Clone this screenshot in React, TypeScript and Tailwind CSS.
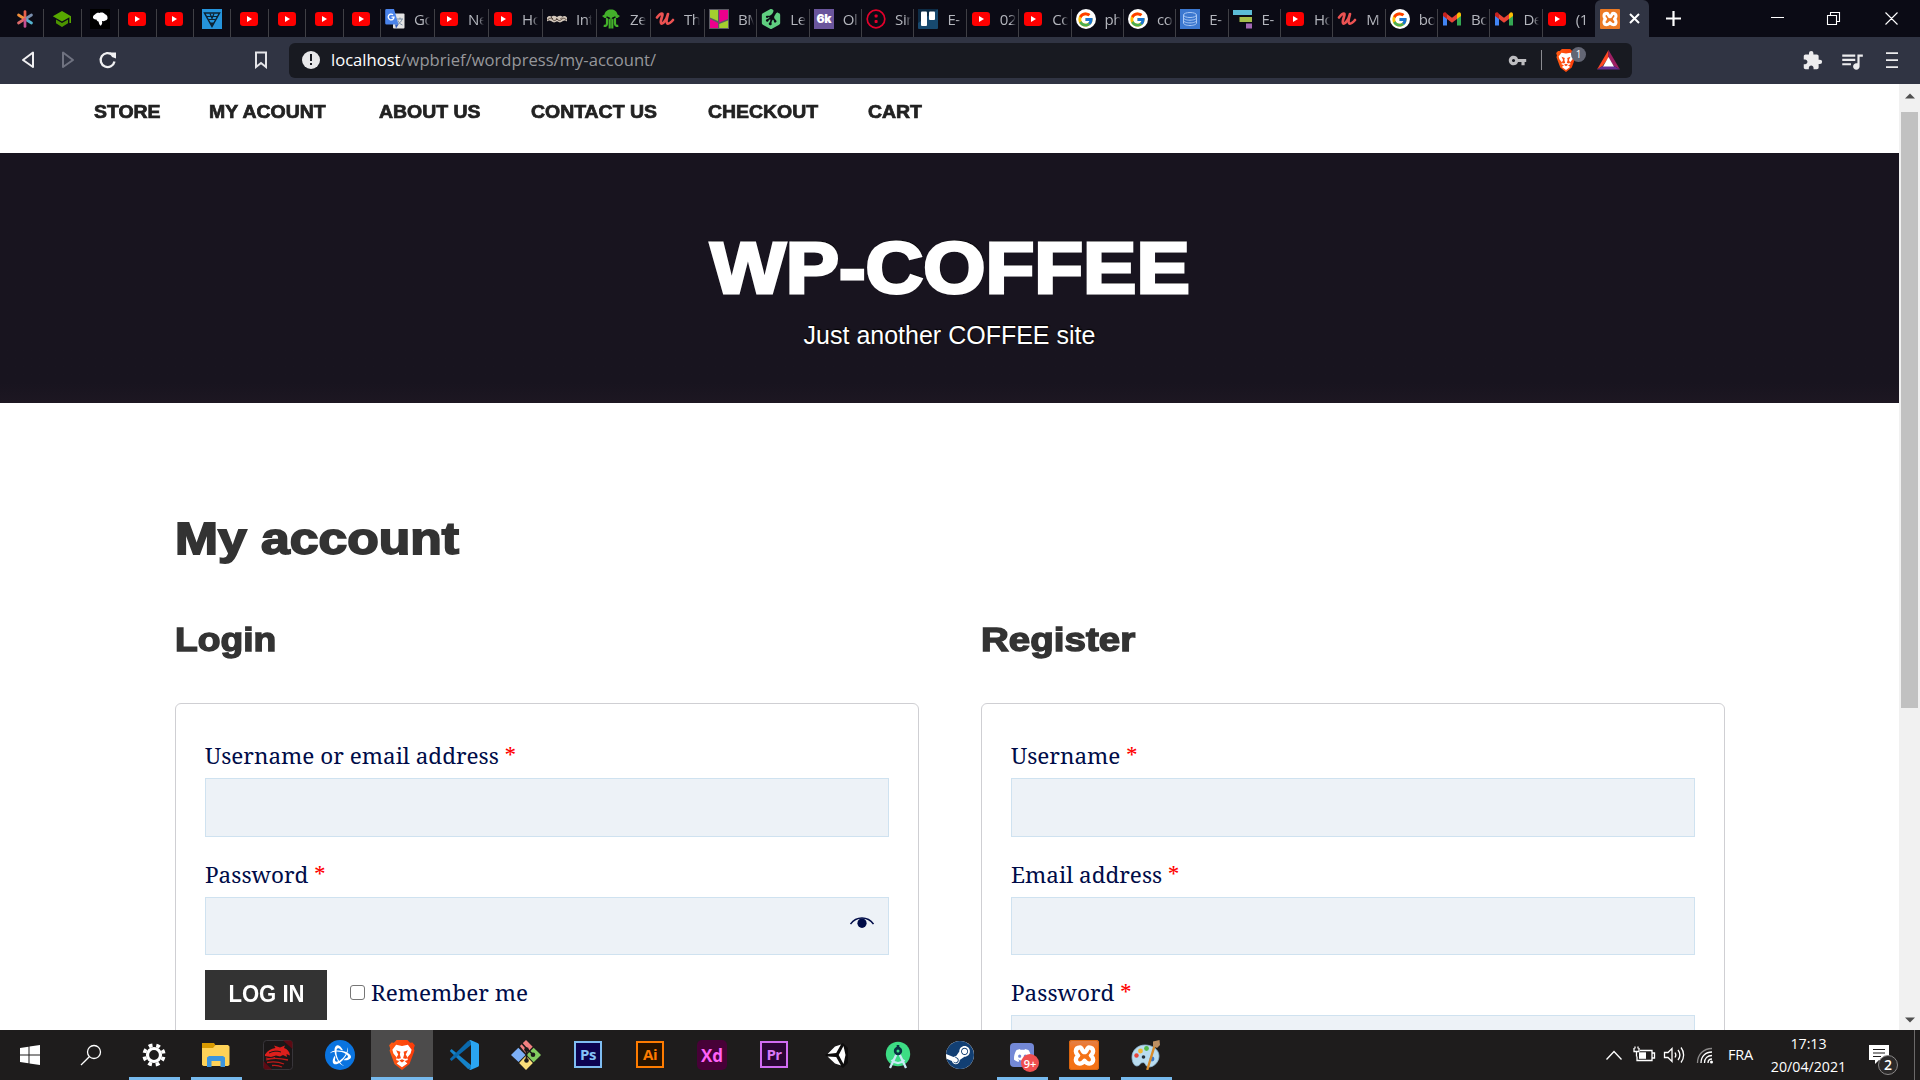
import React from "react";
import { SiSteam, SiBattledotnet, SiTreehouse, SiDiscord } from "react-icons/si";
import { FcGoogle } from "react-icons/fc";
import { MdExtension, MdVpnKey, MdQueueMusic } from "react-icons/md";

/* ---------- tab favicons (20 x 20) ---------- */

const YouTube = () => (
  <svg width="20" height="20" viewBox="0 0 20 20">
    <rect x="1" y="3" width="18" height="14" rx="3.2" fill="#f00" />
    <path d="M8 7v6l5-3z" fill="#fff" />
  </svg>
);

const Asterisk = () => (
  <svg width="20" height="20" viewBox="0 0 20 20" strokeWidth="2.7" strokeLinecap="round" fill="none">
    <path d="M10 8.500V2.500" stroke="#e8604c" />
    <path d="M9 9.500 3.500 6" stroke="#f2903a" />
    <path d="M11 9.500 16.500 6" stroke="#7a8fae" />
    <path d="M9 10.500 3.500 14" stroke="#dd6a6a" />
    <path d="M11 10.500 16.500 14" stroke="#54b3cf" />
    <path d="M10 11v6.500" stroke="#c44f92" />
    <circle cx="10" cy="10" r="1.600" fill="#d85a72" stroke="none" />
  </svg>
);

const GradCap = () => (
  <svg width="20" height="20" viewBox="0 0 20 20">
    <path d="M10 2 .8 7.200 10 12.500l7.400-4.200V14H19V7.200z" fill="#57a800" />
    <path d="M4 10.600v3.600L10 18l6-3.800v-3.600L10 14z" fill="#4c9400" />
  </svg>
);

const Profile = () => (
  <svg width="20" height="20" viewBox="0 0 20 20">
    <rect width="20" height="20" fill="#000" />
    <path d="M3 9c-.3-2 .8-3 2-3.500C6 4 8 3.500 9.500 4c2-.8 4.500-.3 5.500 1.200 1.800.5 2.700 2 2.500 3.600.3 1.400-.8 2.600-2.200 2.700-1 1-2.300.8-3.300.6.4 1.500.3 3.400-1.200 4.600-1.500-.7-1.800-2.700-2.300-4.200-1.200-.2-1.800-.8-2-2C5 10.500 4 10.500 3 9z" fill="#fff" />
  </svg>
);

const BlueTriangle = () => (
  <svg width="20" height="20" viewBox="0 0 20 20">
    <rect width="20" height="20" fill="#2594dc" />
    <path d="M2.500 4h15L10 17.500z" fill="none" stroke="#0c2233" strokeWidth="1.500" />
    <path d="M4.500 7.500h11M6.500 10.500h7M8 4.500l2 5 2-5" fill="none" stroke="#0c2233" strokeWidth="1.200" />
    <path d="M8 13.500h4l-2 3.500z" fill="#0c2233" />
  </svg>
);

const Translate = () => (
  <svg width="20" height="20" viewBox="0 0 20 20">
    <rect x="8" y="4.500" width="11.500" height="15" rx="1" fill="#e3e3e3" />
    <path d="M12 10h6M15 8.500V10M17 10c-.5 2.500-2.500 4.500-4.500 5.500M13 11.500c.5 1.800 2 3.500 4.500 4.500" stroke="#7b8fa5" strokeWidth="1" fill="none" />
    <path d="M1.500 0H9l4.500 15.500h-12A1.300 1.300 0 0 1 .2 14.200V1.300A1.300 1.300 0 0 1 1.500 0z" fill="#4a83ea" />
    <path d="m10 15.500 3.500 0-2.500 4z" fill="#3058b8" />
    <path d="M8 5.800a2.900 2.900 0 1 0 1 2.400H6.500" stroke="#fff" strokeWidth="1.300" fill="none" />
  </svg>
);

const Rope = () => (
  <svg width="20" height="20" viewBox="0 0 20 20">
    <path d="M0 8.500c1.500-1.500 3-1.800 4.500-.8 1.500-1.500 3.500-1.300 5.500.3 2-1.600 4-1.800 5.500-.3 1.500-1 3-.7 4.500.8v4c-1.500-1.500-3-1.200-4.500-.2-1.500 1.500-3.500 1.500-5.500 0-2 1.500-4 1.500-5.500 0-1.500-1-3-1.300-4.500.2z" fill="#d3c7bb" />
    <path d="M.5 11c2-2.500 3.500-2 5-.5s3 1.300 4.500-.5c1.500 1.800 3 2 4.500.5s3-2 5 .5M4 8l2 2M9 9.500l2 1M15 8.500l-1.500 1.500" stroke="#54463d" strokeWidth="1" fill="none" />
  </svg>
);

const Squid = () => (
  <svg width="20" height="20" viewBox="0 0 20 20">
    <path d="M3.500 5.500C4 2.500 6.500.5 10 .5s6 2 6.500 5L19 7l-2.500 2H3.500L1 7z" fill="#43b02a" />
    <path d="M6 9v5.500c0 2-1.500 2.500-3.300 2.300M8.700 9v10.500M11.300 9v10.500M14 9v5.500c0 2 1.500 2.500 3.300 2.300" stroke="#43b02a" strokeWidth="2.200" fill="none" />
    <path d="M5.500 7.800 8.800 9.500M14.500 7.800l-3.300 1.700" stroke="#0b0b14" strokeWidth="1.500" />
  </svg>
);

const Udemy = () => (
  <svg width="20" height="20" viewBox="0 0 20 20">
    <path d="M2 8.500C4 6 5.500 4.500 7 4.700c2 .3-2.300 6.800-1 9.300 1.300 2.200 5.500-3 7-9 -1.200 4.500-2.200 8.800-.5 9.500 1.500.6 3.800-1.500 5.500-3.500" stroke="#ec5252" strokeWidth="2.700" strokeLinecap="round" strokeLinejoin="round" fill="none" />
  </svg>
);

const PinkLime = () => (
  <svg width="20" height="20" viewBox="0 0 20 20">
    <rect width="20" height="20" fill="#5b5b63" />
    <path d="M1 1h8v11L1 8.500z" fill="#a4cf2e" />
    <path d="M10.200 1H19v9l-8.800 3.500z" fill="#ec008c" />
    <path d="M1 10l8 4v5H1z" fill="#ec008c" />
    <path d="M10.200 15 19 11.500V19h-8.800z" fill="#a4cf2e" />
  </svg>
);

const Bk = () => (
  <div className="flex h-5 w-5 items-center justify-center bg-[#6a559c] font-['Inter'] text-[12px] font-black leading-none tracking-[-0.5px] text-white">6k</div>
);

const RedFace = () => (
  <svg width="20" height="20" viewBox="0 0 20 20">
    <circle cx="10" cy="10" r="8.800" fill="none" stroke="#e4002b" strokeWidth="1.700" />
    <rect x="8.600" y="5.500" width="3" height="3" rx=".8" fill="#e4002b" />
    <rect x="8.600" y="11" width="3" height="3" rx=".8" fill="#e4002b" />
  </svg>
);

const Trello = () => (
  <svg width="20" height="20" viewBox="0 0 20 20">
    <rect width="20" height="20" rx="1" fill="#17496f" />
    <path d="M0 0h20L0 14z" fill="#0d2c46" />
    <rect x="3" y="2.500" width="6" height="14.500" rx="1" fill="#fff" />
    <rect x="11" y="2.500" width="6" height="8.500" rx="1" fill="#fff" />
  </svg>
);

const Database = () => (
  <svg width="20" height="20" viewBox="0 0 20 20">
    <rect width="20" height="20" fill="#3c78d0" />
    <g fill="none" stroke="#a9c8f5" strokeWidth="1">
      <ellipse cx="10" cy="6" rx="6.500" ry="2.500" />
      <path d="M3.500 6v8c0 1.400 3 2.500 6.500 2.500s6.500-1.100 6.500-2.500V6M3.500 8.700c0 1.400 3 2.500 6.500 2.500s6.500-1.100 6.500-2.500M3.500 11.400c0 1.400 3 2.500 6.500 2.500s6.500-1.100 6.500-2.500" />
    </g>
  </svg>
);

const Gantt = () => (
  <svg width="20" height="20" viewBox="0 0 20 20">
    <rect x="0" y="1" width="19" height="5" fill="#5bbcd6" />
    <rect x="6.500" y="8" width="12.500" height="5" fill="#a5bf4a" />
    <rect x="13" y="14.500" width="6" height="5" fill="#a368b5" />
  </svg>
);

const Gmail = () => (
  <svg width="20" height="20" viewBox="0 0 20 20">
    <path d="M1 6v10.500h4V9z" fill="#4285f4" />
    <path d="M19 6v10.500h-4V9z" fill="#34a853" />
    <path d="M15 5v5l4-3V5.200c0-2-2-2.600-3-1.500z" fill="#fbbc04" />
    <path d="M5 5 10 8.700 15 5v5l-5 3.800L5 10z" fill="#ea4335" />
    <path d="M1 5.200V7l4 3V4.700l-1-.9C3 2.800 1 3.500 1 5.200z" fill="#c5221f" />
  </svg>
);

const Google = () => (
  <div className="flex h-5 w-5 items-center justify-center rounded-full bg-white">
    <FcGoogle size={17} />
  </div>
);

const Treehouse = () => (
  <div className="flex h-5 w-5 items-center justify-center"><SiTreehouse size={20} color="#5fcf80" /></div>
);

const Xampp = ({ large = false }: { large?: boolean }) => (
  <div className={large ? "flex h-[30px] w-[30px] items-center justify-center rounded-[3px] bg-gradient-to-b from-[#e0814a] to-[#f47216] to-30% ring-1 ring-inset ring-[#d9640f]" : "flex h-5 w-5 items-center justify-center rounded-[1px] bg-[#ec7a24]"}>
    <svg width={large ? 23 : 16} height={large ? 23 : 16} viewBox="0 0 24 24" fill="none" stroke="#fff" strokeWidth="4.600" strokeLinejoin="round">
      <path d="M7.500 3.500C4.500 3.500 3 5.200 3 7.500c0 2 1 3.300 2.300 4.500C4 13.200 3 14.500 3 16.500c0 2.300 1.500 4 4 4s3.500-1 5-3c1.500 2 2.500 3 5 3s4-1.700 4-4c0-2-1-3.300-2.300-4.500C20 10.800 21 9.500 21 7.500c0-2.300-1.500-4-4.500-4M7.500 3.500C9.500 3.500 9.500 8.500 12 8.500s2.500-5 4.500-5" />
    </svg>
  </div>
);

/* ---------- browser chrome ---------- */

const smallTabs: React.FC[] = [Asterisk, GradCap, Profile, YouTube, YouTube, BlueTriangle, YouTube, YouTube, YouTube, YouTube];

const wideTabs: [React.FC, string][] = [
  [Translate, "Go"], [YouTube, "Ne"], [YouTube, "Ho"], [Rope, "Int"], [Squid, "Ze"], [Udemy, "Th"], [PinkLime, "BM"], [Treehouse, "Le"],
  [Bk, "Ol"], [RedFace, "Sin"], [Trello, "E-"], [YouTube, "02"], [YouTube, "Co"], [Google, "ph"], [Google, "co"], [Database, "E-"],
  [Gantt, "E-"], [YouTube, "Ho"], [Udemy, "M"], [Google, "bo"], [Gmail, "Bo"], [Gmail, "De"], [YouTube, "(1"],
];

function TabStrip() {
  return (
    <div className="flex h-[37px] bg-[#0b0b15]">
      <div className="flex w-[381px] shrink-0 pl-[7px]">
        {smallTabs.map((Icon, i) => (
          <div key={i} className="flex flex-1 pt-[9px]">
            <div className="flex flex-1 justify-center border-r border-[#3f3f45] pr-px"><Icon /></div>
          </div>
        ))}
      </div>
      <div className="flex w-[1214px] shrink-0">
        {wideTabs.map(([Icon, label], i) => (
          <div key={i} className={i < 6 ? "flex w-[54px] shrink-0 pt-[9px]" : "flex min-w-0 flex-1 pt-[9px]"}>
            <div className={i === wideTabs.length - 1 ? "flex min-w-0 flex-1 pl-[4px]" : "flex min-w-0 flex-1 border-r border-[#3f3f45] pl-[4px]"}>
              <div className="shrink-0"><Icon /></div>
              <div className="ml-[9px] w-[16px] overflow-hidden whitespace-nowrap font-['Open_Sans',sans-serif] text-[15px] leading-5 tracking-[-0.400px] text-[#b4b6bd] [mask-image:linear-gradient(to_right,#000_65%,transparent)]">{label}</div>
            </div>
          </div>
        ))}
      </div>
      <div className="flex w-[54px] shrink-0 rounded-t-[6px] bg-[#303443] pl-[5px] pt-[9px]">
        <Xampp />
        <svg className="ml-[9px] mt-1" width="11" height="11" viewBox="0 0 11 11" stroke="#fff" strokeWidth="2"><path d="m1 1 9 9m0-9-9 9" /></svg>
      </div>
      <svg className="ml-[17px] mt-[11px]" width="15" height="15" viewBox="0 0 15 15" stroke="#fff" strokeWidth="2.200"><path d="M7.500 0v15M0 7.500h15" /></svg>
      <div className="ml-auto flex pr-[22px] pt-3">
        <svg width="127" height="13" viewBox="0 0 127 13" stroke="#fff" fill="none" strokeWidth="1.100">
          <path d="M0 5.500h13M56.500 3.500h9v9h-9zM59.500 3.500V.5h9v9h-3M114.500.5l12 12m0-12-12 12" />
        </svg>
      </div>
    </div>
  );
}

function Toolbar() {
  return (
    <div className="flex h-[47px] items-center bg-[#303443]">
      <svg className="ml-5 -mt-px" width="96" height="20" viewBox="0 0 96 20" fill="none" strokeWidth="2" strokeLinejoin="round">
        <path d="M13 2.500v14.500L3 10z" stroke="#f0f0f2" />
        <path d="M43 2.500v14.500l10-7z" stroke="#6f7280" />
        <path d="M92.500 5A7 7 0 1 0 94.500 11.500" stroke="#f0f0f2" strokeWidth="2.300" />
        <path d="M89.500 2.500H96v6l-4-1.500z" fill="#f0f0f2" />
      </svg>
      <svg className="-mt-px ml-[139px]" width="12" height="18" viewBox="0 0 12 18" fill="none" stroke="#e4e4e8" strokeWidth="2"><path d="M1 1.500h10V16l-5-4-5 4z" /></svg>
      <div className="-mt-px ml-[22px] flex h-[35px] w-[1343px] items-center rounded-[6px] bg-[#181a21]">
        <div className="ml-[13px] flex h-[18px] w-[18px] flex-col items-center rounded-full bg-[#e8e8ea] pt-[3px]">
          <span className="h-[7px] w-[2px] bg-[#181a21]" />
          <span className="mt-[2px] h-[2px] w-[2px] bg-[#181a21]" />
        </div>
        <div className="ml-[11px] whitespace-nowrap font-['Open_Sans',sans-serif] text-[16.600px] leading-none text-[#96979b]"><span className="text-white">localhost</span>/wpbrief/wordpress/my-account/</div>
        <MdVpnKey className="ml-auto" size={19} color="#bdbdc0" />
        <div className="ml-[14px] h-5 w-px bg-[#8a8b90]" />
        <div className="relative ml-[14px]">
          <BraveLion width={20} height={23} />
          <span className="absolute -top-[2px] left-[15px] flex h-[15px] w-[15px] items-center justify-center rounded-full bg-[#636674] font-['Open_Sans',sans-serif] text-[10px] leading-none text-white">1</span>
        </div>
        <svg className="ml-[21px] mr-[12px]" width="23" height="20" viewBox="0 0 23 20">
          <path d="M11.500 0v8L5.500 16 0 19.500z" fill="#ff4724" />
          <path d="M11.500 0 23 19.500 17 16l-5.500-8z" fill="#9e1f63" />
          <path d="M0 19.500h23L17 16H5.500z" fill="#662d91" />
          <path d="M11.500 7 17 16.500H6z" fill="#fff" />
        </svg>
      </div>
      <div className="ml-auto flex items-center pr-[22px]">
        <MdExtension size={21} color="#ececee" />
        <MdQueueMusic className="ml-[16px]" size={26} color="#ececee" />
        <svg className="ml-[21px]" width="12" height="17" viewBox="0 0 12 17" stroke="#ececee" strokeWidth="1.800"><path d="M0 1.200h12M0 8.200h12M0 15.200h12" /></svg>
      </div>
    </div>
  );
}

function BraveLion({ width, height }: { width: number; height: number }) {
  return (
    <svg width={width} height={height} viewBox="0 0 24 28">
      <defs>
        <linearGradient id="lion" x1="0" x2="1"><stop offset="0" stopColor="#ff5a12" /><stop offset="1" stopColor="#fb3a08" /></linearGradient>
      </defs>
      <path d="M7 0h10l2.500 2.500 2.200-.2L24 5l-1 3 .6 2-4.600 12.500L12 28l-7-5.500L.4 10 1 8 0 5l2.300-2.700 2.200.2z" fill="url(#lion)" />
      <path d="M12 5.500 17.500 4.500 21 9l-1 3.500-3.200 4 .7 2.200-3 1L17 22l-5 3.500L7 22l2.500-2.300-3-1 .7-2.200L4 12.500 3 9l3.500-4.500z" fill="#fff" />
      <path d="M6.500 9.500 10.500 11l-.5 2.500L11 17l-3 .7-1-1.700 1.500-2.500zM17.500 9.500 13.500 11l.5 2.500L13 17l3 .7 1-1.700-1.500-2.500zM9.500 19.200 12 18l2.500 1.200L12 21z" fill="#fb4a10" />
    </svg>
  );
}

/* ---------- page ---------- */

const navItems: [string, string][] = [
  ["STORE", "w-[115px]"], ["MY ACOUNT", "w-[169.500px]"], ["ABOUT US", "w-[152px]"], ["CONTACT US", "w-[177px]"], ["CHECKOUT", "w-[160.500px]"], ["CART", "w-[60px]"],
];

const Field = ({ label, tall = false, eye = false }: { label: string; tall?: boolean; eye?: boolean }) => (
  <div>
    <div className="h-[30px] whitespace-nowrap text-[22.500px] leading-[30px] text-[#000c48]">
      {label} <span className="text-[#f00]">*</span>
    </div>
    <div className={tall ? "mt-[7px] flex h-[59px] justify-end border border-[#cfe2f0] bg-[#edf2f7]" : "mt-[7px] flex h-[58px] justify-end border border-[#cfe2f0] bg-[#edf2f7]"}>
      {eye && (
        <svg className="mr-[14px] mt-[19px]" width="24" height="12" viewBox="0 0 24 12">
          <path d="M.5 7C3 3.500 7 1 12 1s9 2.500 11.500 6" fill="none" stroke="#000c48" strokeWidth="1.500" />
          <ellipse cx="12" cy="6.200" rx="4.600" ry="4.800" fill="#000c48" />
        </svg>
      )}
    </div>
  </div>
);

function Page() {
  return (
    <div className="flex h-[946px] overflow-hidden bg-white">
      <div className="w-[1899px] shrink-0">
        <nav className="flex h-[69px] pl-[94px] pt-[16px] font-['Liberation_Sans',sans-serif] text-[17.500px] font-bold leading-6 text-[#222] [-webkit-text-stroke:0.700px_#222]">
          {navItems.map(([t, w]) => <div key={t} className={`${w} whitespace-nowrap`}><span className="inline-block origin-left scale-x-[1.110]">{t}</span></div>)}
        </nav>
        <header className="flex h-[250px] flex-col items-center bg-gradient-to-b from-[#18141f] from-92% to-[#1d1722] text-white">
          <h1 className="mt-[70px] h-[90px] scale-x-[1.110] font-['Liberation_Sans',sans-serif] text-[72px] font-bold leading-[90px] [-webkit-text-stroke:3px_#fff] [text-shadow:1px_-2px_1px_#000]">WP-COFFEE</h1>
          <p className="mt-[6px] font-['Liberation_Sans',sans-serif] text-[25px] leading-[32px] [text-shadow:1px_-1px_1px_#000]">Just another COFFEE site</p>
        </header>
        <main className="pl-[175px] pt-[106px]">
          <h2 className="h-[60px] origin-left scale-x-[1.160] font-['Liberation_Sans',sans-serif] text-[44.500px] font-bold leading-[60px] text-[#333] [-webkit-text-stroke:1.800px_#333]">My account</h2>
          <div className="mt-[46px] flex gap-[62px]">
            <section className="w-[744px]">
              <h3 className="h-[50px] origin-left scale-x-[1.110] font-['Liberation_Sans',sans-serif] text-[33.500px] font-bold leading-[50px] text-[#333] [-webkit-text-stroke:1.400px_#333]">Login</h3>
              <div className="mt-[38px] h-[500px] rounded-[6px] border border-[#cfcfd3] px-[29px] pt-[37px] font-['Noto_Serif',serif]">
                <Field label="Username or email address" tall />
                <div className="mt-[23px]"><Field label="Password" eye /></div>
                <div className="mt-[15px] flex items-start">
                  <div className="flex h-[50px] w-[122px] items-center justify-center bg-[#333] pb-px font-['Liberation_Sans',sans-serif] font-bold leading-none text-white"><span className="scale-x-[0.940] whitespace-nowrap text-[23.500px]">LOG IN</span></div>
                  <div className="ml-[23px] mt-[15px] h-[15px] w-[15px] rounded-[3px] border border-[#767676] bg-white" />
                  <div className="ml-[6px] mt-[8px] text-[22.500px] leading-[30px] text-[#000c48]">Remember me</div>
                </div>
              </div>
            </section>
            <section className="w-[744px]">
              <h3 className="h-[50px] origin-left scale-x-[1.150] font-['Liberation_Sans',sans-serif] text-[33.500px] font-bold leading-[50px] text-[#333] [-webkit-text-stroke:1.400px_#333]">Register</h3>
              <div className="mt-[38px] h-[500px] rounded-[6px] border border-[#cfcfd3] px-[29px] pt-[37px] font-['Noto_Serif',serif]">
                <Field label="Username" tall />
                <div className="mt-[23px]"><Field label="Email address" /></div>
                <div className="mt-[23px]"><Field label="Password" /></div>
              </div>
            </section>
          </div>
        </main>
      </div>
      <div className="flex w-[21px] flex-col items-center bg-[#f1f1f1]">
        <svg className="mt-[9px] shrink-0" width="10" height="6" viewBox="0 0 10 6"><path d="M0 5.500h10L5 .5z" fill="#505050" /></svg>
        <div className="mt-[13px] h-[596px] w-[17px] bg-[#c1c1c1]" />
        <svg className="mb-[7px] mt-auto shrink-0" width="10" height="6" viewBox="0 0 10 6"><path d="M0 .5h10l-5 5z" fill="#505050" /></svg>
      </div>
    </div>
  );
}

/* ---------- taskbar ---------- */

const AdobeTile = ({ label, box }: { label: string; box: string }) => (
  <div className={`flex h-[27px] w-7 -translate-y-px items-center justify-center border-2 font-['Open_Sans',sans-serif] text-[15px] font-bold leading-none tracking-[-0.500px] ${box}`}>{label}</div>
);

const taskIcons: { icon: React.ReactNode; open?: boolean; active?: boolean }[] = [
  { icon: <svg width="20" height="20" viewBox="0 0 20 20" fill="#fff"><path d="M0 3 8.500 1.700v7.800H0zM9.500 1.500 20 0v9.500H9.500zM0 10.500h8.500v7.800L0 17zM9.500 10.500H20V20L9.500 18.500z" /></svg> },
  { icon: <svg className="mr-[3px]" width="22" height="22" viewBox="0 0 22 22" fill="none" stroke="#fff" strokeWidth="1.300"><circle cx="14" cy="8" r="6.500" /><path d="M9.300 12.700 1 21" /></svg> },
  {
    open: true,
    icon: (
      <svg width="24" height="24" viewBox="0 0 24 24" fill="none" stroke="#fff">
        <circle cx="12" cy="12" r="6.500" strokeWidth="3.200" />
        <circle cx="12" cy="12" r="9.800" strokeWidth="3.600" strokeDasharray="3.850 3.850" strokeDashoffset="-2" />
      </svg>
    ),
  },
  {
    open: true,
    icon: (
      <svg width="28" height="24" viewBox="0 0 28 24">
        <path d="M0 0h12l2 3v4H0z" fill="#d99a00" />
        <path d="M0 5h11l2.500-3H26l1.500 1.500V22L26 23H1.500L0 22z" fill="#ffd257" />
        <path d="M5 24V14.500L7 13h14l2 1.500V24h-4.500v-6h-9v6z" fill="#3d95dd" />
      </svg>
    ),
  },
  {
    icon: (
      <svg width="30" height="30" viewBox="0 0 30 30">
        <rect x=".5" y=".5" width="29" height="29" rx="3" fill="#1a1718" stroke="#38353a" />
        <path d="M20 .5h7q2.500 0 2.500 2.500v6zM.5 21v6q0 2.500 2.500 2.500h6z" fill="#5c0a13" />
        <path d="M2 14.500c3-4 6-6 10.500-6.500L11 5.500l6 2 5-2-1 2.500c3.500 1 5.500 3.500 6 7.500l-3.500-1.500.5 3-4-2-3 1.500-4-1-5 1.500-6-1z" fill="#dd1f1c" />
        <path d="M3 20c5-2 14-2 22 0M4 22.500c5-1 11-1 17 1.500M9 25.500c4-.5 7 0 10 1.500M3 18c3 1 6 1 9-.5" stroke="#c01a19" strokeWidth="1.300" fill="none" />
        <path d="M6 13c4-2 8-2.500 12-1" stroke="#1a1718" strokeWidth="1" fill="none" />
      </svg>
    ),
  },
  { icon: <div className="flex h-[30px] w-[30px] items-center justify-center rounded-full bg-[#0a74e0]"><SiBattledotnet size={21} color="#fff" /></div> },
  { active: true, icon: <BraveLion width={26} height={30} /> },
  {
    icon: (
      <svg width="30" height="30" viewBox="0 0 30 30">
        <path d="M2.500 9 22 25v3.500l-3 .500L.8 11z" fill="#1583c9" />
        <path d="M2.500 21 22 5V1.500L19 1 .8 19z" fill="#0a69ad" />
        <path d="M21.500 0 29 3.200a2 2 0 0 1 1 1.800v20a2 2 0 0 1-1 1.800L21.500 30l-2-1c1.500.3 2.500-.500 2.500-2V3c0-1.500-1-2.300-2.500-2z" fill="#2aa5f2" />
      </svg>
    ),
  },
  {
    icon: (
      <svg width="30" height="30" viewBox="0 0 30 30">
        <path d="M15 0 21.700 6.700 15 13.400 8.900 6.100z" fill="#f28080" />
        <path d="M7.300 7.700 14.500 15l-7 7L0 15z" fill="#7db0f7" />
        <path d="M22.700 7.700 30 15l-7.300 7.300L15.500 15z" fill="#84cc60" />
        <path d="M15 15.800l6.900 7.200L15 30l-6.900-7z" fill="#fbdf7a" />
        <path d="m10.500 3 5 5.500L22 14.500M15.500 9v11" stroke="#1c1a1a" strokeWidth="1.700" fill="none" />
        <circle cx="15.500" cy="9.500" r="2.300" fill="#1c1a1a" /><circle cx="22" cy="14.700" r="2.300" fill="#1c1a1a" /><circle cx="15.500" cy="20.500" r="2.300" fill="#1c1a1a" />
      </svg>
    ),
  },
  { icon: <AdobeTile label="Ps" box="border-[#7fbdf2] bg-[#0c0350] text-[#86c3f8]" /> },
  { icon: <AdobeTile label="Ai" box="border-[#ff7c00] bg-[#261300] text-[#ff7c00]" /> },
  { icon: <div className="flex h-[30px] w-[30px] items-center justify-center rounded-[5px] bg-[#470137] pt-px font-['Open_Sans',sans-serif] text-[17px] font-bold leading-none text-[#ff61f6]">Xd</div> },
  { icon: <AdobeTile label="Pr" box="border-[#d26cf3] bg-[#2a0634] text-[#d878f8]" /> },
  {
    icon: (
      <svg width="30" height="28" viewBox="0 0 30 28">
        <path d="M4 14 22 2l5 5v15l-5 5z" fill="#0e0d0d" />
        <path d="M6.500 13 14 5.500l6-2-4.800 8.500zM6.500 15.500 14 22.500l6 2L15.200 16zM22.500 5l2 9-2 9-4.800-9z" fill="#fff" />
      </svg>
    ),
  },
  {
    icon: (
      <svg width="28" height="28" viewBox="0 0 28 28">
        <circle cx="14" cy="13" r="12.200" fill="#3ddc84" />
        <path d="M14 10 6 27M14 10l8 17M7.500 19c4 4 9 4 13 0" stroke="#c9e9f5" strokeWidth="2.300" fill="none" />
        <circle cx="14" cy="10" r="4.200" fill="#083042" /><circle cx="14" cy="10" r="1.500" fill="#3ddc84" />
        <rect x="12.700" y="4" width="2.600" height="3" fill="#083042" />
      </svg>
    ),
  },
  { icon: <div className="flex h-7 w-7 items-center justify-center rounded-full bg-white"><SiSteam size={28} color="#123f73" /></div> },
  {
    open: true,
    icon: (
      <div className="relative flex h-6 w-6 items-center justify-center rounded-[4px] bg-[#7388d6]">
        <SiDiscord size={17} color="#fff" />
        <span className="absolute left-[11px] top-[11px] flex h-[18px] w-[18px] items-center justify-center rounded-full bg-[#f04f50] font-['Open_Sans',sans-serif] text-[11px] font-semibold leading-none text-white">9+</span>
      </div>
    ),
  },
  { open: true, icon: <Xampp large /> },
  {
    open: true,
    icon: (
      <svg width="30" height="30" viewBox="0 0 30 30">
        <path d="M14 5C6 5 1 11 1 17c0 5 2 9 5 9s3-3.500 6-3.500 2 4.500 6 4.500c5 0 10-5 10-11S22 5 14 5z" fill="#b9dcf0" stroke="#8fb9d4" strokeWidth=".8" />
        <circle cx="5.500" cy="15.500" r="2.200" fill="#e8443a" /><circle cx="9.500" cy="11" r="2.400" fill="#f2b632" /><circle cx="15.500" cy="8.500" r="2.400" fill="#55b948" /><circle cx="12.500" cy="17" r="1.800" fill="#26313a" /><circle cx="21" cy="19" r="2.400" fill="#3a78c9" />
        <path d="m23.500 6-7 23" stroke="#d98b2b" strokeWidth="2.400" strokeLinecap="round" />
        <path d="M22 1.500 28.500 0 29 5l-3 3-4-2z" fill="#bd8f62" />
      </svg>
    ),
  },
];

function Taskbar() {
  return (
    <div className="flex h-[50px] overflow-hidden bg-[#1e1c1c]">
      <div className="-ml-px flex">
        {taskIcons.map((t, i) => (
          <div key={i} className={t.active ? "flex w-[62px] flex-col items-center bg-[#4c4b4b]" : "flex w-[62px] flex-col items-center"}>
            <div className="flex h-[47px] items-center pt-[3px]">{t.icon}</div>
            <div className={t.active ? "h-[3px] w-full bg-[#76b9ed]" : t.open ? "h-[3px] w-[51px] bg-[#76b9ed]" : "h-[3px]"} />
          </div>
        ))}
      </div>
      <div className="ml-auto flex h-[50px] items-center font-['Open_Sans',sans-serif] text-white">
        <svg width="108" height="20" viewBox="0 0 108 20" fill="none" stroke="#fff" strokeWidth="1.300">
          <path d="m.5 14.500 7.500-8 7.500 8" />
          <path d="M34 5.500h12v10H31v-4M46 8h2.500v5H46M28 3v3.500h5V3M29 1.500v2M32 1.500v2M30.500 6.500v5" />
          <rect x="33" y="7.300" width="7" height="6.500" fill="#fff" stroke="none" />
          <path d="M58.500 7.500H62l4-4v13l-4-4h-3.500zM69 7.500c1 1.500 1 3.500 0 5M72 5c2.300 3 2.300 7 0 10M75 2.500c3.500 4.500 3.500 10.500 0 15" />
          <path d="M91.500 18C91.500 9.500 97.500 3.500 106 3.500" stroke="#8b8989" />
          <path d="M95 18c0-6.500 4.500-11 11-11M98.500 18c0-4.500 3-7.500 7.500-7.500M102 18c0-2.500 1.500-4 4-4" />
          <circle cx="105.500" cy="17" r="1.500" fill="#fff" stroke="none" />
        </svg>
        <div className="ml-[14px] w-[28px] text-[14.500px] leading-none tracking-[-0.200px]">FRA</div>
        <div className="ml-[13px] flex w-[79px] flex-col items-center pb-px text-[14.200px] leading-[23px]">
          <span>17:13</span>
          <span>20/04/2021</span>
        </div>
        <div className="relative ml-[21px] h-[50px] w-[45px]">
          <svg className="mt-[15px]" width="20" height="20" viewBox="0 0 20 20"><path d="M0 0h20v15H10l-4 4v-4H0z" fill="#fff" /><path d="M4 4.500h12M4 8h12M4 11.500h8" stroke="#1e1c1c" strokeWidth="1.200" /></svg>
          <span className="absolute left-[9px] top-[25px] flex h-5 w-5 items-center justify-center rounded-full border border-[#8a8888] bg-[#2b2929] text-[14px] font-semibold leading-none">2</span>
        </div>
        <div className="mr-[5px] h-[50px] w-px bg-[#6b6969]" />
      </div>
    </div>
  );
}

export default function App() {
  return (
    <div className="h-[1080px] w-[1920px] overflow-hidden">
      <TabStrip />
      <Toolbar />
      <Page />
      <Taskbar />
    </div>
  );
}
